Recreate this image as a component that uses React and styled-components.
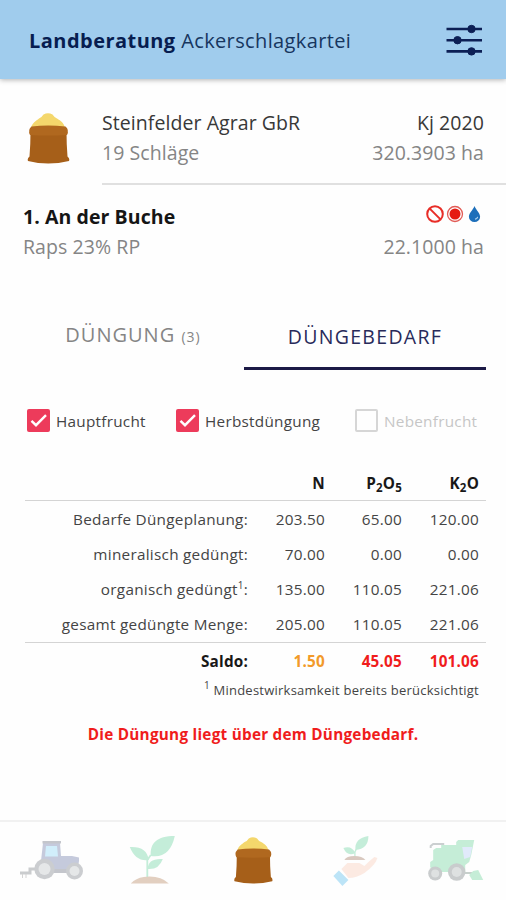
import React from "react";
import styled, { createGlobalStyle } from "styled-components";

const GlobalStyle = createGlobalStyle`
  * { box-sizing: border-box; }
  body { margin: 0; background: #fefefe; font-family: "Open Sans", "Noto Sans", sans-serif; color: #303030; }
`;

const Screen = styled.div`
  width: 506px;
  height: 900px;
  display: flex;
  flex-direction: column;
  overflow: hidden;
`;

const Header = styled.header`
  height: 79px;
  flex: none;
  display: flex;
  align-items: center;
  justify-content: space-between;
  padding: 2px 23px 0 29px;
  background: #a0cced;
  box-shadow: 0 1px 5px rgba(0, 0, 0, 0.3);
`;

const Title = styled.h1`
  margin: 0;
  padding-top: 1px;
  font-size: 20px;
  font-weight: 400;
  line-height: 28px;
  letter-spacing: 0.37px;
  color: #17365f;
  white-space: pre;
`;

const TitleStrong = styled.strong`
  font-weight: 700;
  color: #071d50;
  letter-spacing: 0.46px;
`;

const Farm = styled.section`
  display: flex;
  flex: none;
  height: 106px;
  padding-left: 27px;
`;

const FarmIcon = styled.div`
  width: 75px;
  padding-top: 34px;
`;

const FarmInfo = styled.div`
  flex: 1;
  padding: 29px 22px 0 0;
  border-bottom: 2px solid #e0e0e0;
`;

const Field = styled.section`
  flex: none;
  height: 117px;
  padding: 17px 22px 0 23px;
`;

const Line = styled.div`
  display: flex;
  justify-content: space-between;
  height: 30px;
  line-height: 30px;
  font-size: 19.5px;
  font-weight: ${(p) => (p.$bold ? 700 : 400)};
  color: ${(p) => (p.$muted ? "#858585" : p.$bold ? "#151515" : "#383838")};
`;

const Label = styled.span`
  letter-spacing: 0.07px;
  white-space: pre;
`;

const Badges = styled.span`
  display: flex;
  padding: 2px 2px 0 0;
`;

const Tabs = styled.nav`
  display: flex;
  flex: none;
  height: 68px;
  padding: 0 20px 0 22px;
`;

const Tab = styled.button`
  flex: none;
  width: ${(p) => (p.$active ? 242 : 222)}px;
  padding: ${(p) => (p.$active ? "4px 0 0" : "0 0 1px")};
  border: 0;
  border-bottom: 3px solid ${(p) => (p.$active ? "#1c1a46" : "transparent")};
  background: none;
  font: inherit;
  font-size: ${(p) => (p.$active ? 19.5 : 20)}px;
  letter-spacing: ${(p) => (p.$active ? "1.3px" : "1px")};
  color: ${(p) => (p.$active ? "#282a5a" : "#858585")};
  white-space: nowrap;
`;

const Count = styled.small`
  font-size: 14px;
`;

const Filters = styled.div`
  display: flex;
  flex: none;
  height: 98px;
  padding: 38px 0 0 27px;
`;

const Filter = styled.label`
  display: flex;
  align-items: center;
  gap: 6px;
  width: ${(p) => p.$width}px;
  height: 24px;
  font-size: 15.3px;
  letter-spacing: 0.26px;
  color: ${(p) => (p.$disabled ? "#c6c6c6" : "#444")};
  white-space: nowrap;
`;

const FilterText = styled.span`
  padding-top: 2px;
`;

const Box = styled.span`
  flex: none;
  display: grid;
  place-items: center;
  width: 23px;
  height: 23px;
  border-radius: 2px;
  background: ${(p) => (p.$checked ? "#ed3b5b" : "transparent")};
  border: ${(p) => (p.$checked ? "0" : "2px solid #d6d6d6")};
`;

const Table = styled.div`
  flex: none;
  margin: 0 20px 0 25px;
`;

const Row = styled.div`
  display: grid;
  grid-template-columns: 223px 77px 77px 77px;
  align-items: center;
  height: ${(p) => p.$height || 35}px;
  padding-top: ${(p) => p.$shift || 0}px;
  padding-bottom: ${(p) => p.$lift || 0}px;
  text-align: right;
  font-size: 15.3px;
  font-weight: ${(p) => (p.$bold ? 700 : 400)};
  letter-spacing: ${(p) => (p.$bold ? "0.2px" : "0.27px")};
  color: ${(p) => (p.$bold ? "#181818" : "#444")};
  border-bottom: ${(p) => (p.$rule ? "1px solid #d4d4d4" : "0")};
  white-space: nowrap;
`;

const Cell = styled.span`
  color: ${(p) => p.$color || "inherit"};
`;

const Sub = styled.sub`
  font-size: 11.5px;
  line-height: 0;
  vertical-align: -3px;
`;

const Sup = styled.sup`
  font-size: 10px;
  line-height: 0;
  vertical-align: 6px;
`;

const Footnote = styled.p`
  margin: 0;
  padding: 0 7px 0 0;
  height: 24px;
  line-height: 24px;
  text-align: right;
  font-size: 13px;
  letter-spacing: 0.24px;
  color: #444;
`;

const Warning = styled.p`
  margin: 20px 0 0;
  height: 24px;
  line-height: 24px;
  text-align: center;
  font-size: 15.3px;
  font-weight: 700;
  letter-spacing: 0.25px;
  color: #f01c1c;
`;

const BottomNav = styled.nav`
  display: flex;
  flex: none;
  height: 80px;
  margin-top: auto;
  border-top: 2px solid #f1f1f1;
`;

const NavItem = styled.button`
  flex: 1;
  padding: 0;
  border: 0;
  background: none;
  opacity: ${(p) => (p.$active ? 1 : 0.3)};
`;

const Icon = styled.svg`
  display: block;
  flex: none;
`;

const NavIcon = styled(Icon)`
  width: 101px;
  height: 78px;
`;

const SackShape = () => (
  <>
    <path d="M4 15C5 10 9 8 12 5.500Q15 4 16.500 1.500Q21-1 25.500 1.500Q27 4 30 5.500C34 8 37 10 38 15Z" fill="#f4d76c" />
    <path d="M3.5 18Q3.500 32 2.500 43.5Q0 45.500 1 48Q21 53 42 48Q43 45.500 40.500 43.5Q39.500 32 39.5 18Z" fill="#a65f19" />
    <path d="M4.5 13.500Q21 11.500 38.500 13.500Q42.500 17 40 22Q21 23 3 22Q.5 17 4.5 13.500Z" fill="#b0681f" />
  </>
);

const Sack = () => (
  <Icon width="43" height="52" viewBox="0 0 43 52"><SackShape /></Icon>
);

const SlidersIcon = () => (
  <Icon width="37" height="34" viewBox="0 0 37 34" fill="#0c1f55" stroke="#0c1f55">
    <path d="M.5 5H36M.5 16.2H36M.5 27.4H36" strokeWidth="2.6" />
    <circle cx="25.5" cy="5" r="3.7" />
    <circle cx="11.5" cy="16.2" r="3.7" />
    <circle cx="25.5" cy="27.4" r="3.7" />
  </Icon>
);

const StatusIcons = () => (
  <Icon width="57" height="20" viewBox="0 0 57 20">
    <circle cx="10" cy="10" r="7.8" fill="none" stroke="#e82d27" strokeWidth="2" />
    <path d="M4.7 4.6L15.5 15.4" stroke="#e82d27" strokeWidth="2" />
    <circle cx="30" cy="10" r="7.5" fill="none" stroke="#e25b55" strokeWidth="1.3" />
    <circle cx="30" cy="10" r="5.5" fill="#e51b12" />
    <path d="M49.5 2C51 6 55.1 9 55.1 12.8A5.6 5.3 0 0 1 43.9 12.8C43.9 9 48 6 49.5 2Z" fill="#1d6fba" />
    <path d="M50 15.2Q52.1 15 52.7 12.8" fill="none" stroke="#b5d5ee" strokeWidth="1.2" />
  </Icon>
);

const Tick = () => (
  <Icon width="23" height="23" viewBox="0 0 23 23">
    <path d="M4.5 11.8L9 16.2L19 6.2" fill="none" stroke="#fff" strokeWidth="2.4" />
  </Icon>
);

const Tractor = () => (
  <NavIcon viewBox="0 823 101 78">
    <path d="M20 874H30V870H40" fill="none" stroke="#555a63" strokeWidth="3" />
    <path d="M22.5 875V879M26 875V879" stroke="#777" strokeWidth="1" />
    <path d="M43 844H60L61 857H72L79 858.500V862L77 874H42L41 862Z" fill="#46568f" />
    <path d="M42.5 842H61V844.5H42.5Z" fill="#42485c" />
    <path d="M46 847H57L58 857.5H45Z" fill="#6ccaf5" />
    <path d="M50 870H70V874H50Z" fill="#42485c" />
    <circle cx="44.5" cy="870" r="10.2" fill="#585f69" /><circle cx="44.5" cy="870" r="6" fill="#aeb4b8" />
    <circle cx="74.5" cy="872" r="8.5" fill="#585f69" /><circle cx="74.5" cy="872" r="5" fill="#aeb4b8" />
  </NavIcon>
);

const Seedling = () => (
  <NavIcon viewBox="101.2 823 101 78">
    <path d="M130 848Q147 847 149 861Q136 863 130 848ZM151 857C150 844 157 837 175 837Q170 860 151 857ZM148 870Q148 859 163 860Q159 871 148 870Z" fill="#42c885" />
    <path d="M151 856L147.5 861V879" fill="none" stroke="#42c885" strokeWidth="1.8" />
    <path d="M131 884.5Q136 879 144 878Q160 876 169 884.5Z" fill="#a36534" />
  </NavIcon>
);

const NavSack = () => (
  <NavIcon viewBox="202.4 823 101 78">
    <g transform="translate(234 838) scale(.92)"><SackShape /></g>
  </NavIcon>
);

const CareHand = () => (
  <NavIcon viewBox="303.6 823 101 78">
    <path d="M341 870L347 864H359L364 867Q370 861 374 858L377 859Q375 866 364 874Q356 879 348 879Z" fill="#f8bea5" />
    <path d="M338.5 871.5L348 881L342 887L333 877Z" fill="#27a9e8" />
    <path d="M343 849Q351 846 355 854Q347 858 343 849ZM355 851Q354 839 368 837Q368 850 355 851Z" fill="#42c885" />
    <path d="M356 850L354.5 853V861" fill="none" stroke="#42c885" strokeWidth="1.3" />
    <path d="M344 861Q346 857 354 857Q362 857 365 861Z" fill="#865334" />
  </NavIcon>
);

const Harvester = () => (
  <NavIcon viewBox="404.8 823 101 78">
    <path d="M433 851L436 849H441V846H456V843L458 841H474L471 856L469 863L465 866V873H433L430 868V863L433 861Z" fill="#43c87e" />
    <path d="M462 848H472L470 858L464 860Z" fill="#9fbdf7" />
    <path d="M430.5 849V847L433 845H444" fill="none" stroke="#576468" strokeWidth="2" />
    <path d="M464 874H473" stroke="#4b6a5c" strokeWidth="2" />
    <path d="M469 876L473 872L478 871L480 875L483 881H472Z" fill="#43c87e" />
    <circle cx="435" cy="874.5" r="7" fill="#515a5e" /><circle cx="435" cy="874.5" r="4" fill="#969fa2" />
    <circle cx="456.5" cy="873" r="8.7" fill="#515a5e" /><circle cx="456.5" cy="873" r="5" fill="#969fa2" />
  </NavIcon>
);

const rows = [
  ["Bedarfe Düngeplanung:", "203.50", "65.00", "120.00"],
  ["mineralisch gedüngt:", "70.00", "0.00", "0.00"],
  [<>organisch gedüngt<Sup>1</Sup>:</>, "135.00", "110.05", "221.06"],
  ["gesamt gedüngte Menge:", "205.00", "110.05", "221.06"],
];

export default function App() {
  return (
    <Screen>
      <GlobalStyle />
      <Header>
        <Title><TitleStrong>Landberatung</TitleStrong> Ackerschlagkartei</Title>
        <SlidersIcon />
      </Header>
      <Farm>
        <FarmIcon><Sack /></FarmIcon>
        <FarmInfo>
          <Line><Label>Steinfelder Agrar GbR</Label><Label>Kj 2020</Label></Line>
          <Line $muted><Label>19 Schläge</Label><Label>320.3903 ha</Label></Line>
        </FarmInfo>
      </Farm>
      <Field>
        <Line $bold><Label>1. An der Buche</Label><Badges><StatusIcons /></Badges></Line>
        <Line $muted><Label>Raps 23% RP</Label><Label>22.1000 ha</Label></Line>
      </Field>
      <Tabs>
        <Tab>DÜNGUNG <Count>(3)</Count></Tab>
        <Tab $active>DÜNGEBEDARF</Tab>
      </Tabs>
      <Filters>
        <Filter $width={149}><Box $checked><Tick /></Box><FilterText>Hauptfrucht</FilterText></Filter>
        <Filter $width={179}><Box $checked><Tick /></Box><FilterText>Herbstdüngung</FilterText></Filter>
        <Filter $width={130} $disabled><Box /><FilterText>Nebenfrucht</FilterText></Filter>
      </Filters>
      <Table>
        <Row $bold $rule $height={33} $lift={3}>
          <Cell /><Cell>N</Cell><Cell>P<Sub>2</Sub>O<Sub>5</Sub></Cell><Cell>K<Sub>2</Sub>O</Cell>
        </Row>
        {rows.map(([name, ...values], i) => (
          <Row key={i} $height={i === 3 ? 37 : 35} $rule={i === 3}>
            <Cell>{name}</Cell>
            {values.map((v, j) => <Cell key={j}>{v}</Cell>)}
          </Row>
        ))}
        <Row $bold $height={35} $shift={1}>
          <Cell>Saldo:</Cell><Cell $color="#f29a2a">1.50</Cell><Cell $color="#f01c1c">45.05</Cell><Cell $color="#f01c1c">101.06</Cell>
        </Row>
        <Footnote><Sup>1</Sup> Mindestwirksamkeit bereits berücksichtigt</Footnote>
      </Table>
      <Warning>Die Düngung liegt über dem Düngebedarf.</Warning>
      <BottomNav>
        <NavItem aria-label="Maschinen"><Tractor /></NavItem>
        <NavItem aria-label="Aussaat"><Seedling /></NavItem>
        <NavItem aria-label="Düngung" $active><NavSack /></NavItem>
        <NavItem aria-label="Pflege"><CareHand /></NavItem>
        <NavItem aria-label="Ernte"><Harvester /></NavItem>
      </BottomNav>
    </Screen>
  );
}
